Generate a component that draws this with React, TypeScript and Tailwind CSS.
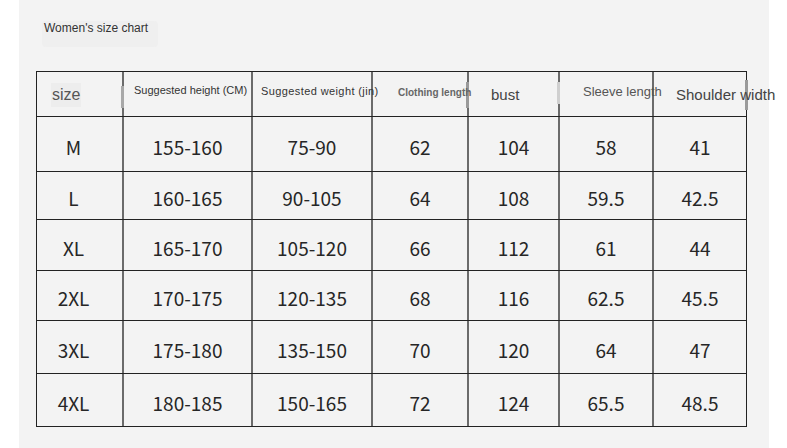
const widths = ["w-[85px]", "w-[129px]", "w-[120px]", "w-[96px]", "w-[91px]", "w-[94px]", "w-[94px]"];

const rows = [
  { h: "h-[55px]", cells: ["M", "155-160", "75-90", "62", "104", "58", "41"] },
  { h: "h-[48px]", cells: ["L", "160-165", "90-105", "64", "108", "59.5", "42.5"] },
  { h: "h-[51px]", cells: ["XL", "165-170", "105-120", "66", "112", "61", "44"] },
  { h: "h-[50px]", cells: ["2XL", "170-175", "120-135", "68", "116", "62.5", "45.5"] },
  { h: "h-[53px]", cells: ["3XL", "175-180", "135-150", "70", "120", "64", "47"] },
  { h: "h-[52px]", cells: ["4XL", "180-185", "150-165", "72", "124", "65.5", "48.5"] },
];

const App = () => {
  return (
    <div className="w-[787px] h-[448px] bg-white overflow-hidden">
      <div className="ml-[19px] w-[750px] h-[448px] bg-[#f3f3f3] pt-[21px] font-['Liberation_Sans',Arial,sans-serif]">
        <div className="ml-[23px] w-[116px] h-[26px] rounded-sm bg-[#efefef] pl-[2px] text-[12px] leading-[14px] text-[#333] whitespace-nowrap">
          Women's size chart
        </div>

        <div className="ml-[17px] mt-[24px] w-[711px] border border-[#222]">
          {/* header */}
          <div className="flex h-[45px] border-b border-[#222]">
            <div className={`${widths[0]} shrink-0 flex items-center pl-[14px] pt-[2px]`}>
              <span className="bg-[#ededed] px-[1px] text-[16px] text-[#555]">size</span>
            </div>
            <div className={`${widths[1]} shrink-0 border-l-2 border-[#6b6b6b] pl-[10px] pt-[5px] relative`}>
              <span className="relative z-10 text-[11px] text-[#333] whitespace-nowrap">Suggested height (CM)</span>
              <span className="absolute left-[-3px] top-[14px] w-[3px] h-[22px] bg-[#a8a8a8]" />
            </div>
            <div className={`${widths[2]} shrink-0 border-l-2 border-[#6b6b6b] pl-[8px] pt-[6px]`}>
              <span className="relative z-10 text-[11px] text-[#333] whitespace-nowrap tracking-[0.4px]">Suggested weight (jin)</span>
            </div>
            <div className={`${widths[3]} shrink-0 border-l-2 border-[#6b6b6b] pl-[25px] pt-[7px] relative`}>
              <span className="relative z-10 text-[10px] font-bold text-[#666] whitespace-nowrap">Clothing length</span>
            </div>
            <div className={`${widths[4]} shrink-0 border-l-2 border-[#6b6b6b] pl-[22px] pt-[11px] relative`}>
              <span className="text-[15px] text-[#444]">bust</span>
              <span className="absolute left-[-3px] top-[10px] w-[3px] h-[26px] bg-[#9a9a9a]" />
            </div>
            <div className={`${widths[5]} shrink-0 border-l-2 border-[#6b6b6b] pl-[23px] pt-[7px] relative`}>
              <span className="relative z-10 text-[13px] text-[#555] whitespace-nowrap">Sleeve length</span>
              <span className="absolute left-[-3px] top-[10px] w-[3px] h-[22px] bg-[#cfcfcf]" />
            </div>
            <div className={`${widths[6]} shrink-0 border-l-2 border-[#6b6b6b] pl-[22px] pt-[11px] relative`}>
              <span className="relative z-10 text-[15px] text-[#444] whitespace-nowrap">Shoulder width</span>
              <span className="absolute right-[-2px] top-[8px] w-[3px] h-[30px] bg-[#9a9a9a]" />
            </div>
          </div>

          {/* body */}
          {rows.map((row, ri) => (
            <div
              key={row.cells[0]}
              className={`flex ${row.h} ${ri < rows.length - 1 ? "border-b border-[#222]" : ""} font-['Noto_Sans_CJK_SC','Noto_Sans',sans-serif] text-[19px] text-[#262626]`}
            >
              {row.cells.map((c, ci) => (
                <div
                  key={ci}
                  className={`${widths[ci]} shrink-0 flex items-center justify-center pt-[6px] ${ci === 0 ? "pr-[12px]" : "border-l-2 border-[#6b6b6b]"}`}
                >
                  {c}
                </div>
              ))}
            </div>
          ))}
        </div>
      </div>
    </div>
  );
};

export default App;
